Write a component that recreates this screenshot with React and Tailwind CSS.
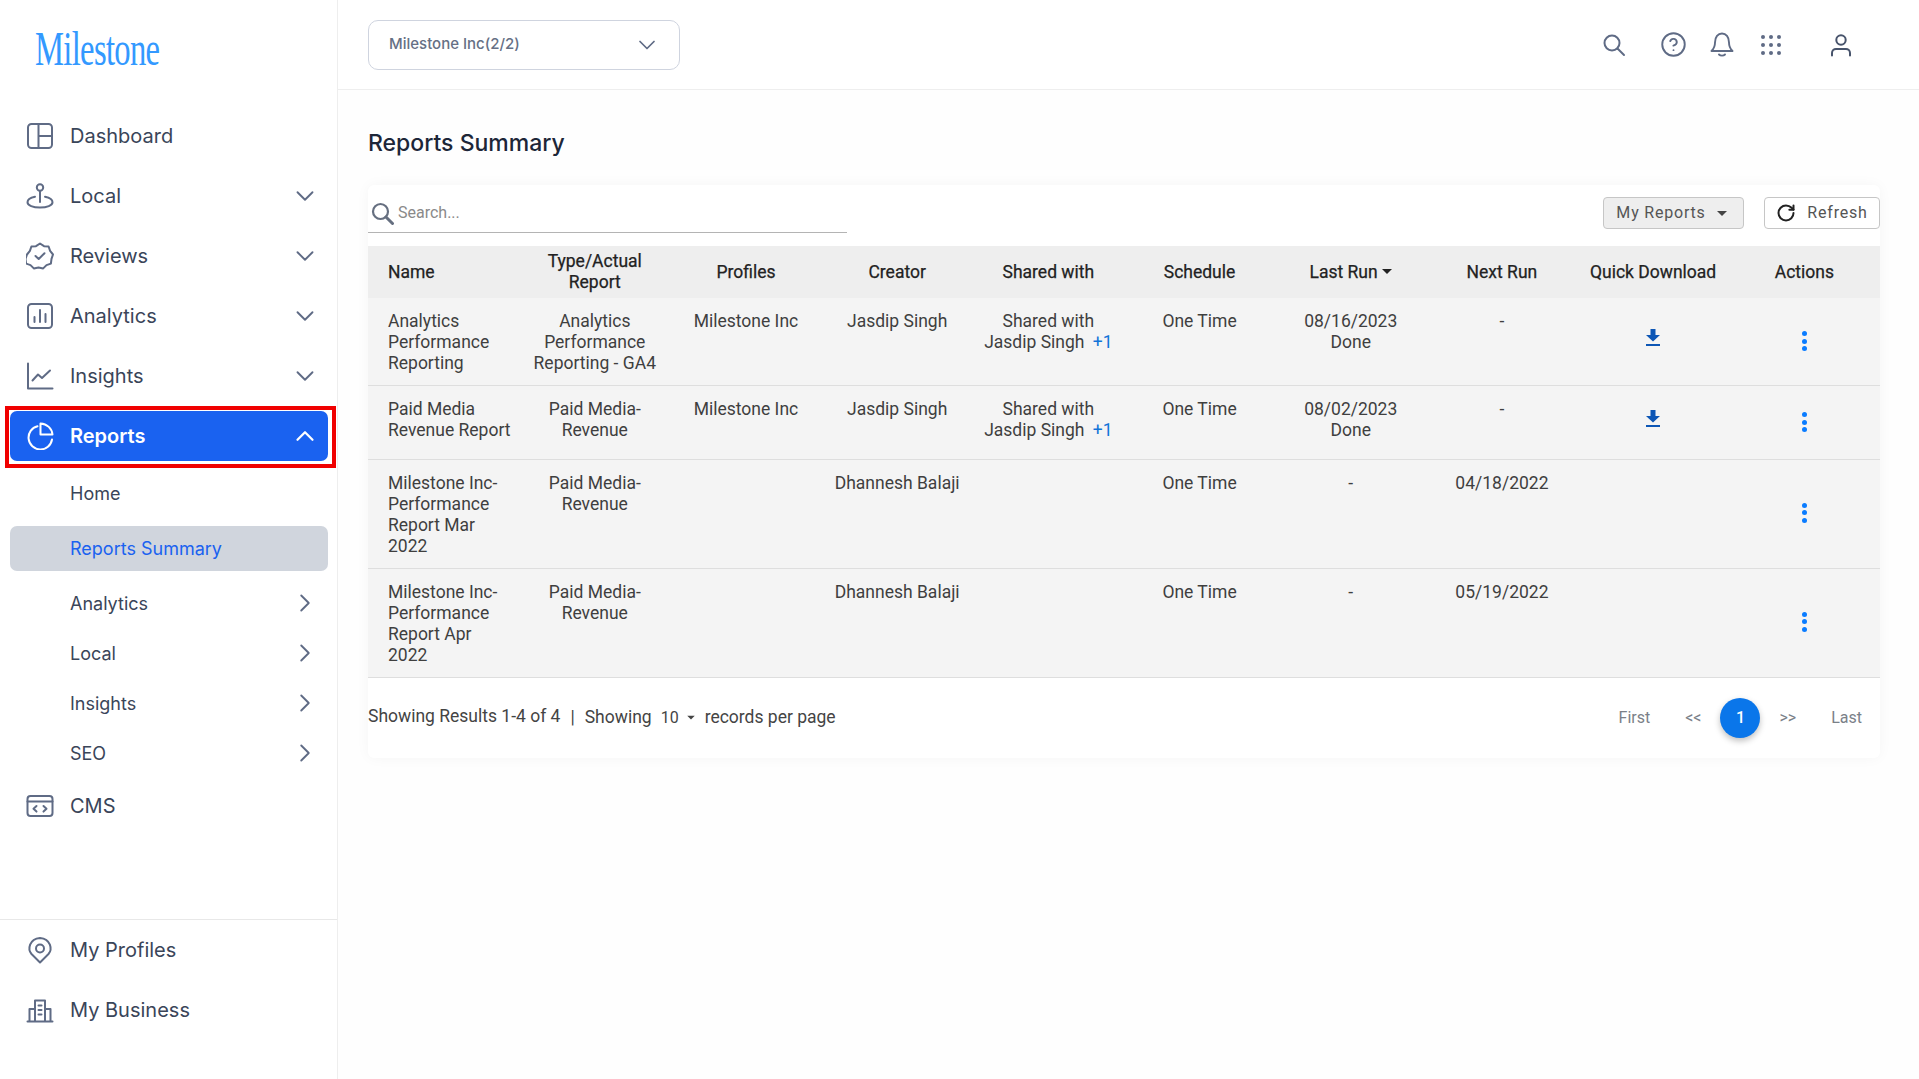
import React from "react";
import { ChevronDown, ChevronUp, ChevronRight, CircleHelp, RotateCw } from "lucide-react";

const I = ({ children, cls = "text-[#5f6b85]", size = 28, sw = 2 }) => (
  <svg width={size} height={size} viewBox="0 0 28 28" fill="none" stroke="currentColor" strokeWidth={sw} strokeLinecap="round" strokeLinejoin="round" className={"shrink-0 " + cls}>
    {children}
  </svg>
);

const icons = {
  Dashboard: <><rect x="2" y="2" width="24" height="24" rx="3.5" /><path d="M12.5 2v24M12.5 14H26" /></>,
  Local: <><circle cx="14" cy="5.5" r="3.2" /><path d="M14 9v11" /><path d="M9 14.8C4.500 15.800 1.500 17.600 1.500 20.200 1.500 23.400 7 25.500 14 25.500s12.500-2.100 12.500-5.300c0-2.600-3-4.400-7.500-5.400" /></>,
  Reviews: <><path d="M14 1.500l4 2.700 4.600.300 1.500 4.400 2.900 3.600-1.500 4.400-.6 4.700-4.400 1.500-3.300 3.300-4.700-1-4.700 1-3.300-3.300-4.400-1.500-.6-4.700L1 12.500l2.900-3.600 1.500-4.400 4.600-.300z" /><path d="M9.500 14l3.200 3 5.800-5.800" /></>,
  Analytics: <><rect x="2" y="2" width="24" height="24" rx="3.500" /><path d="M8.500 20v-5M14 20V8M19.500 20v-8" /></>,
  Insights: <><path d="M2 1.500V26.500H26.500" /><path d="M6.500 18.500l5.500-6 4 3.500 8-7.500" /></>,
  Reports: <><path d="M11.500 4.200A11.800 11.800 0 1 0 26 17.500" /><path d="M14.500 1.500V12.500H26.500C26 6.500 21 1.800 14.500 1.500z" /></>,
  CMS: <><rect x="1.500" y="4" width="25" height="20" rx="3" /><path d="M1.500 9.500h25M10.500 14l-3 2.800 3 2.800M17.500 14l3 2.800-3 2.800" /></>,
  "My Profiles": <><path d="M14 26.500L5.500 18C1.500 13.500 3 3 14 2c11 1 12.500 11.500 8.500 16z" /><circle cx="14" cy="12.500" r="4" /></>,
  "My Business": <><path d="M1.500 25.500h25M9 25.500V4.500h10v21M9 13H3.500v12.500M19 13h5.500v12.500M12.500 9.500h3M12.500 14h3M12.500 18.500h3" /></>,
};

const NavItem = ({ name, chevron }) => (
  <div className="flex h-[60px] items-center pl-[26px] pr-[17px]">
    <I>{icons[name]}</I>
    <span className="ml-[16px] flex-1 text-[20px] text-[#3a4559]">{name}</span>
    {chevron && <ChevronDown size={30} strokeWidth={1.500} className="text-[#5f6b85]" />}
  </div>
);

const SubItem = ({ name }) => (
  <div className="flex h-[50px] items-center pl-[70px] pr-[17px]">
    <span className="flex-1 text-[18px] text-[#3a4559]">{name}</span>
    <ChevronRight size={30} strokeWidth={1.500} className="text-[#5f6b85]" />
  </div>
);

const Download = () => (
  <svg width="14" height="17" viewBox="0 0 14 17" className="mx-auto">
    <path d="M4.500 0h5v6H14L7 12.500 0 6h4.500z" fill="#0d56b5" />
    <rect y="15" width="14" height="2" fill="#0d56b5" />
  </svg>
);

const Dots = ({ cls = "pb-[2px]" }) => (
  <div className={"flex flex-col items-center gap-[2.500px] " + cls}>
    <span className="h-[5px] w-[5px] rounded-full bg-[#0a7cff]" />
    <span className="h-[5px] w-[5px] rounded-full bg-[#0a7cff]" />
    <span className="h-[5px] w-[5px] rounded-full bg-[#0a7cff]" />
  </div>
);

const Caret = ({ cls = "" }) => (
  <span className={"inline-block border-x-[5px] border-t-[5px] border-x-transparent border-t-current align-middle " + cls} />
);

const Shared = () => (
  <>
    Shared with
    <br />
    Jasdip Singh <span className="ml-[4px] text-[#1273d8]">+1</span>
  </>
);

const rows = [
  { name: "Analytics Performance Reporting", type: <>Analytics<br />Performance<br />Reporting - GA4</>, profile: "Milestone Inc", creator: "Jasdip Singh", shared: true, last: <>08/16/2023<br />Done</>, next: "-", dl: true, dlCls: "pb-[8px]", h: "h-[87px]" },
  { name: "Paid Media Revenue Report", type: <>Paid Media-<br />Revenue</>, profile: "Milestone Inc", creator: "Jasdip Singh", shared: true, last: <>08/02/2023<br />Done</>, next: "-", dl: true, dlCls: "pb-[8px]", h: "h-[74px]" },
  { name: "Milestone Inc-Performance Report Mar 2022", type: <>Paid Media-<br />Revenue</>, profile: "", creator: "Dhannesh Balaji", last: "-", next: "04/18/2022", h: "h-[109px]" },
  { name: "Milestone Inc-Performance Report Apr 2022", type: <>Paid Media-<br />Revenue</>, profile: "", creator: "Dhannesh Balaji", last: "-", next: "05/19/2022", h: "h-[109px]" },
];

const td = "px-[8px] pt-[13px] align-top text-center";

export default function App() {
  return (
    <div className="flex h-screen w-full overflow-hidden bg-[#fefefe] font-['Inter',sans-serif]">
      <aside className="flex w-[338px] shrink-0 flex-col border-r border-[#eeeeee] bg-white">
        <div className="flex h-[106px] shrink-0 items-start pl-[35px] pt-[22px]">
          <span className="origin-left scale-x-[0.68] font-['Liberation_Serif',serif] text-[48px] leading-[54px] tracking-[-1px] text-[#3399ff] whitespace-nowrap">Milestone</span>
        </div>
        <NavItem name="Dashboard" />
        <NavItem name="Local" chevron />
        <NavItem name="Reviews" chevron />
        <NavItem name="Analytics" chevron />
        <NavItem name="Insights" chevron />
        <div className="relative h-[60px] pl-[10px] pr-[9px] py-[5px]">
          <div className="flex h-[50px] items-center rounded-[7px] bg-[#1a62f0] pl-[16px] pr-[8px]">
            <I cls="text-white">{icons.Reports}</I>
            <span className="ml-[16px] flex-1 text-[20px] font-semibold text-white">Reports</span>
            <ChevronUp size={30} strokeWidth={1.800} className="text-white" />
          </div>
          <div className="pointer-events-none absolute top-0 -bottom-[2px] left-[5px] right-[1px] border-[4px] border-[#f00000]" />
        </div>
        <div className="mt-[3px] flex h-[50px] items-center pl-[70px] pb-[1px] text-[18px] text-[#3a4559]">Home</div>
        <div className="ml-[10px] mr-[9px] mt-[7px] flex h-[45px] items-center rounded-[7px] bg-[#d0d5dd] pl-[60px] text-[18px] text-[#1a62f0]">Reports Summary</div>
        <div className="mt-[7px]" />
        <SubItem name="Analytics" />
        <SubItem name="Local" />
        <SubItem name="Insights" />
        <SubItem name="SEO" />
        <div className="flex h-[56px] items-center pl-[26px]">
          <I>{icons.CMS}</I>
          <span className="ml-[16px] text-[20px] text-[#3a4559]">CMS</span>
        </div>
        <div className="mt-auto mb-[39px] border-t border-[#e8e8e8]">
          <NavItem name="My Profiles" />
          <NavItem name="My Business" />
        </div>
      </aside>

      <main className="flex min-w-0 flex-1 flex-col">
        <header className="flex h-[90px] shrink-0 items-center border-b border-[#eeeeee] bg-white pl-[30px]">
          <div className="flex h-[50px] w-[312px] items-center justify-between rounded-[10px] border border-[#cfd4df] pl-[20px] pr-[18px]">
            <span className="pb-[1px] text-[15px] font-medium text-[#667085]">Milestone Inc(2/2)</span>
            <ChevronDown size={28} strokeWidth={1.500} className="text-[#5f6b85]" />
          </div>
          <div className="ml-auto flex items-center pr-[67px] text-[#5f6b85]">
            <svg width="24" height="24" viewBox="0 0 24 24" fill="none" stroke="currentColor" strokeWidth="2" strokeLinecap="round">
              <circle cx="10" cy="10" r="7.500" />
              <path d="M15.500 15.500L22 22" />
            </svg>
            <CircleHelp size={27} strokeWidth={1.700} className="ml-[34px]" />
            <svg width="24" height="26" viewBox="0 0 24 26" fill="none" stroke="currentColor" strokeWidth="1.900" strokeLinecap="round" strokeLinejoin="round" className="ml-[23px]">
              <path d="M5 10.500C5 5 8 1.500 12 1.500s7 3.500 7 9c0 5 1.500 6.500 3.500 8.500h-21C3.500 17 5 15.500 5 10.500z" />
              <path d="M9 22.500c1.500 1.500 4.500 1.500 6 0" />
            </svg>
            <div className="ml-[27px] grid grid-cols-3 gap-x-[4px] gap-y-[4px]">
              {Array.from({ length: 9 }).map((_, i) => (
                <span key={i} className="h-[4px] w-[4px] rounded-full bg-[#5f6b85]" />
              ))}
            </div>
            <svg width="22" height="24" viewBox="0 0 22 24" fill="none" stroke="#47536b" strokeWidth="2" strokeLinecap="round" className="ml-[49px]">
              <circle cx="11" cy="7" r="4.700" />
              <path d="M2 22.500V20c0-2.500 2-4 4-4h10c2 0 4 1.500 4 4v2.500" />
            </svg>
          </div>
        </header>

        <div className="pl-[30px] pr-[39px]">
          <h1 className="flex h-[95px] items-center pt-[12px] text-[23px] font-medium text-[#1d2638]">Reports Summary</h1>
          <section className="rounded-[6px] bg-white font-['Roboto',sans-serif] shadow-[0_0_14px_rgba(0,0,0,0.04)]">
            <div className="flex h-[61px] items-start justify-between pt-[12px]">
              <div className="flex h-[36px] w-[479px] items-center border-b border-[#b4b4b4] pb-[3px] pl-[3px]">
                <svg width="23" height="23" viewBox="0 0 23 23" fill="none" stroke="#666f80" strokeWidth="2.200" strokeLinecap="round">
                  <circle cx="9.500" cy="9.500" r="7.500" />
                  <path d="M15 15l6.500 6.500" strokeWidth="3" />
                </svg>
                <span className="ml-[4px] text-[16px] text-[#8a8a8a]">Search...</span>
              </div>
              <div className="flex gap-[20px]">
                <div className="flex h-[32px] w-[141px] items-center justify-center rounded-[4px] border border-[#c6c6c6] bg-[#eeeeee] pr-[4px] text-[16px] tracking-[0.8px] text-[#555555]">
                  My Reports <Caret cls="ml-[11px] text-[#444444]" />
                </div>
                <div className="flex h-[32px] w-[116px] items-center justify-center rounded-[4px] border border-[#c6c6c6] bg-white text-[16px] tracking-[0.8px] text-[#555555]">
                  <RotateCw size={20} strokeWidth={2.400} className="mr-[11px] text-[#222222]" /> Refresh
                </div>
              </div>
            </div>

            <table className="w-full table-fixed border-collapse text-[17.500px] leading-[21px] text-[#3f3f3f]">
              <thead>
                <tr className="h-[52px] bg-[#eeeeee] text-[#222222]">
                  <th className="pl-[20px] text-left font-normal [-webkit-text-stroke:0.25px]">Name</th>
                  <th className="px-[8px] font-normal [-webkit-text-stroke:0.25px]">Type/Actual<br />Report</th>
                  <th className="font-normal [-webkit-text-stroke:0.25px]">Profiles</th>
                  <th className="font-normal [-webkit-text-stroke:0.25px]">Creator</th>
                  <th className="font-normal [-webkit-text-stroke:0.25px]">Shared with</th>
                  <th className="font-normal [-webkit-text-stroke:0.25px]">Schedule</th>
                  <th className="font-normal [-webkit-text-stroke:0.25px]">Last Run <Caret cls="mb-[2px] text-[#222222]" /></th>
                  <th className="font-normal [-webkit-text-stroke:0.25px]">Next Run</th>
                  <th className="font-normal whitespace-nowrap [-webkit-text-stroke:0.25px]">Quick Download</th>
                  <th className="font-normal [-webkit-text-stroke:0.25px]">Actions</th>
                </tr>
              </thead>
              <tbody>
                {rows.map((r, i) => (
                  <tr key={i} className={"border-b border-[#dedede] bg-[#f4f4f4] " + r.h}>
                    <td className="pl-[20px] pr-[8px] pt-[13px] align-top text-left">{r.name}</td>
                    <td className={td}>{r.type}</td>
                    <td className={td + " px-0"}>{r.profile}</td>
                    <td className={td + " px-0"}>{r.creator}</td>
                    <td className={td + " px-0"}>{r.shared && <Shared />}</td>
                    <td className={td}>One Time</td>
                    <td className={td}>{r.last}</td>
                    <td className={td}>{r.next}</td>
                    <td className={"align-middle " + (r.dlCls || "")}>{r.dl && <Download />}</td>
                    <td className="align-middle"><Dots cls={i < 2 ? "pb-0" : "pb-[2px]"} /></td>
                  </tr>
                ))}
              </tbody>
            </table>

            <div className="flex h-[80px] items-center justify-between text-[17.500px] text-[#444444]">
              <div className="flex items-center whitespace-nowrap">
                <span className="-mt-[2px]">Showing Results 1-4 of 4</span>
                <span className="mx-[10px]">|</span>
                <span>Showing</span>
                <span className="ml-[9px] text-[16px]">10</span>
                <Caret cls="ml-[7px] scale-75" />
                <span className="ml-[9px]">records per page</span>
              </div>
              <div className="flex items-center pr-[18px] text-[16px] text-[#7a8088]">
                <span>First</span>
                <span className="ml-[35px]">&lt;&lt;</span>
                <span className="ml-[19px] flex h-[40px] w-[40px] items-center justify-center rounded-full bg-[#0a76ea] font-medium text-white shadow-[0_3px_6px_rgba(0,0,0,0.25)]">1</span>
                <span className="ml-[19px]">&gt;&gt;</span>
                <span className="ml-[35px]">Last</span>
              </div>
            </div>
          </section>
        </div>
      </main>
    </div>
  );
}
